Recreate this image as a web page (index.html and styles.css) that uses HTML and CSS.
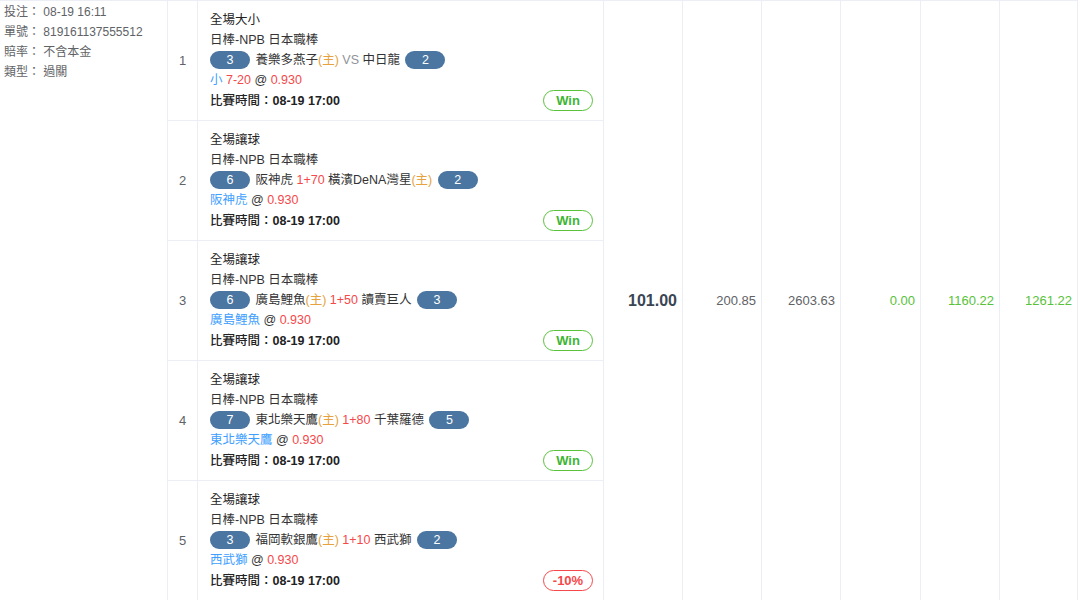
FILE: index.html
```html
<!DOCTYPE html>
<html lang="zh-Hant">
<head>
    <meta charset="UTF-8">
    <meta name="viewport" content="width=device-width, initial-scale=1.0">
    <title>注單明細</title>
    <link rel="stylesheet" href="styles.css">
</head>
<body>

<div class="order">
    <!-- Order info -->
    <div class="info">
        <p>投注： 08-19 16:11</p>
        <p>單號： 819161137555512</p>
        <p>賠率： 不含本金</p>
        <p>類型： 過關</p>
    </div>

    <!-- Parlay legs -->
    <div class="bets">
        <div class="bet">
            <div class="idx">1</div>
            <div class="detail">
                <p class="title">全場大小</p>
                <p>日棒-NPB 日本職棒</p>
                <p class="teams"><span class="score">3</span> 養樂多燕子<span class="home">(主)</span> <span class="vs">VS</span> 中日龍 <span class="score">2</span></p>
                <p><span class="pick">小</span> <span class="red">7-20</span> @ <span class="red">0.930</span></p>
                <div class="time-row">
                    <p class="time">比賽時間：<b>08-19 17:00</b></p>
                    <span class="result win">Win</span>
                </div>
            </div>
        </div>
        <div class="bet">
            <div class="idx">2</div>
            <div class="detail">
                <p class="title">全場讓球</p>
                <p>日棒-NPB 日本職棒</p>
                <p class="teams"><span class="score">6</span> 阪神虎 <span class="red">1+70</span> 橫濱DeNA灣星<span class="home">(主)</span> <span class="score">2</span></p>
                <p><span class="pick">阪神虎</span> @ <span class="red">0.930</span></p>
                <div class="time-row">
                    <p class="time">比賽時間：<b>08-19 17:00</b></p>
                    <span class="result win">Win</span>
                </div>
            </div>
        </div>
        <div class="bet">
            <div class="idx">3</div>
            <div class="detail">
                <p class="title">全場讓球</p>
                <p>日棒-NPB 日本職棒</p>
                <p class="teams"><span class="score">6</span> 廣島鯉魚<span class="home">(主)</span> <span class="red">1+50</span> 讀賣巨人 <span class="score">3</span></p>
                <p><span class="pick">廣島鯉魚</span> @ <span class="red">0.930</span></p>
                <div class="time-row">
                    <p class="time">比賽時間：<b>08-19 17:00</b></p>
                    <span class="result win">Win</span>
                </div>
            </div>
        </div>
        <div class="bet">
            <div class="idx">4</div>
            <div class="detail">
                <p class="title">全場讓球</p>
                <p>日棒-NPB 日本職棒</p>
                <p class="teams"><span class="score">7</span> 東北樂天鷹<span class="home">(主)</span> <span class="red">1+80</span> 千葉羅德 <span class="score">5</span></p>
                <p><span class="pick">東北樂天鷹</span> @ <span class="red">0.930</span></p>
                <div class="time-row">
                    <p class="time">比賽時間：<b>08-19 17:00</b></p>
                    <span class="result win">Win</span>
                </div>
            </div>
        </div>
        <div class="bet">
            <div class="idx">5</div>
            <div class="detail">
                <p class="title">全場讓球</p>
                <p>日棒-NPB 日本職棒</p>
                <p class="teams"><span class="score">3</span> 福岡軟銀鷹<span class="home">(主)</span> <span class="red">1+10</span> 西武獅 <span class="score">2</span></p>
                <p><span class="pick">西武獅</span> @ <span class="red">0.930</span></p>
                <div class="time-row">
                    <p class="time">比賽時間：<b>08-19 17:00</b></p>
                    <span class="result lose">-10%</span>
                </div>
            </div>
        </div>
    </div>

    <!-- Totals -->
    <div class="sum amount">101.00</div>
    <div class="sum">200.85</div>
    <div class="sum">2603.63</div>
    <div class="sum green wider">0.00</div>
    <div class="sum green">1160.22</div>
    <div class="sum green last">1261.22</div>
</div>

</body>
</html>
```

FILE: styles.css
```css
:root {
    --border-color: #ebeef5;
    --text-color: #333;
    --muted-color: #606266;
    --badge-color: #4b76a1;
    --green: #58c23a;
    --red: #f5484a;
    --blue: #409eff;
    --orange: #e6a23c;
}

* {
    margin: 0;
    padding: 0;
    box-sizing: border-box;
}

body {
    font-family: "Liberation Sans", "Noto Sans CJK TC", sans-serif;
    font-size: 12px;
    line-height: 20px;
    color: var(--text-color);
    background-color: white;
}

.order {
    display: flex;
    width: 1078px;
    border-top: 1px solid var(--border-color);
}

.info {
    width: 168px;
    padding: 1px 4px;
    color: var(--muted-color);
    border-right: 1px solid var(--border-color);
}

.bets {
    width: 436px;
    border-right: 1px solid var(--border-color);
}

.bet {
    display: flex;
    height: 120px;
    border-bottom: 1px solid var(--border-color);
}

.idx {
    width: 30px;
    display: flex;
    align-items: center;
    justify-content: center;
    font-size: 13px;
    color: var(--muted-color);
    border-right: 1px solid var(--border-color);
}

.detail {
    flex: 1;
    padding: 9px 10px 0 12px;
    font-size: 12.5px;
}

.title {
    color: #222;
}

.score {
    display: inline-block;
    width: 40px;
    height: 18px;
    line-height: 18px;
    border-radius: 9px;
    text-align: center;
    vertical-align: middle;
    color: white;
    background-color: var(--badge-color);
    margin: -2px 2px 0 0;
}

.score:last-child {
    margin: -2px 0 0 2px;
}

.home {
    color: var(--orange);
}

.vs {
    color: #909399;
}

.pick {
    color: var(--blue);
}

.red {
    color: var(--red);
}

.time-row {
    display: flex;
    justify-content: space-between;
    align-items: center;
}

.time {
    font-weight: 500;
    color: #222;
}

.time b {
    font-weight: bold;
}

.result {
    display: inline-block;
    width: 50px;
    height: 21px;
    line-height: 19px;
    border-radius: 11px;
    text-align: center;
    font-size: 13px;
    font-weight: bold;
}

.win {
    color: #3fb536;
    border: 1px solid var(--green);
}

.lose {
    color: var(--red);
    border: 1px solid var(--red);
}

.sum {
    width: 79px;
    display: flex;
    align-items: center;
    justify-content: flex-end;
    padding-right: 5px;
    font-size: 13px;
    color: var(--muted-color);
    border-right: 1px solid var(--border-color);
}

.sum.wider {
    width: 80px;
}

.sum.last {
    width: 78px;
}

.amount {
    font-size: 16px;
    font-weight: bold;
    color: #3a4553;
}

.green {
    color: var(--green);
}
```
